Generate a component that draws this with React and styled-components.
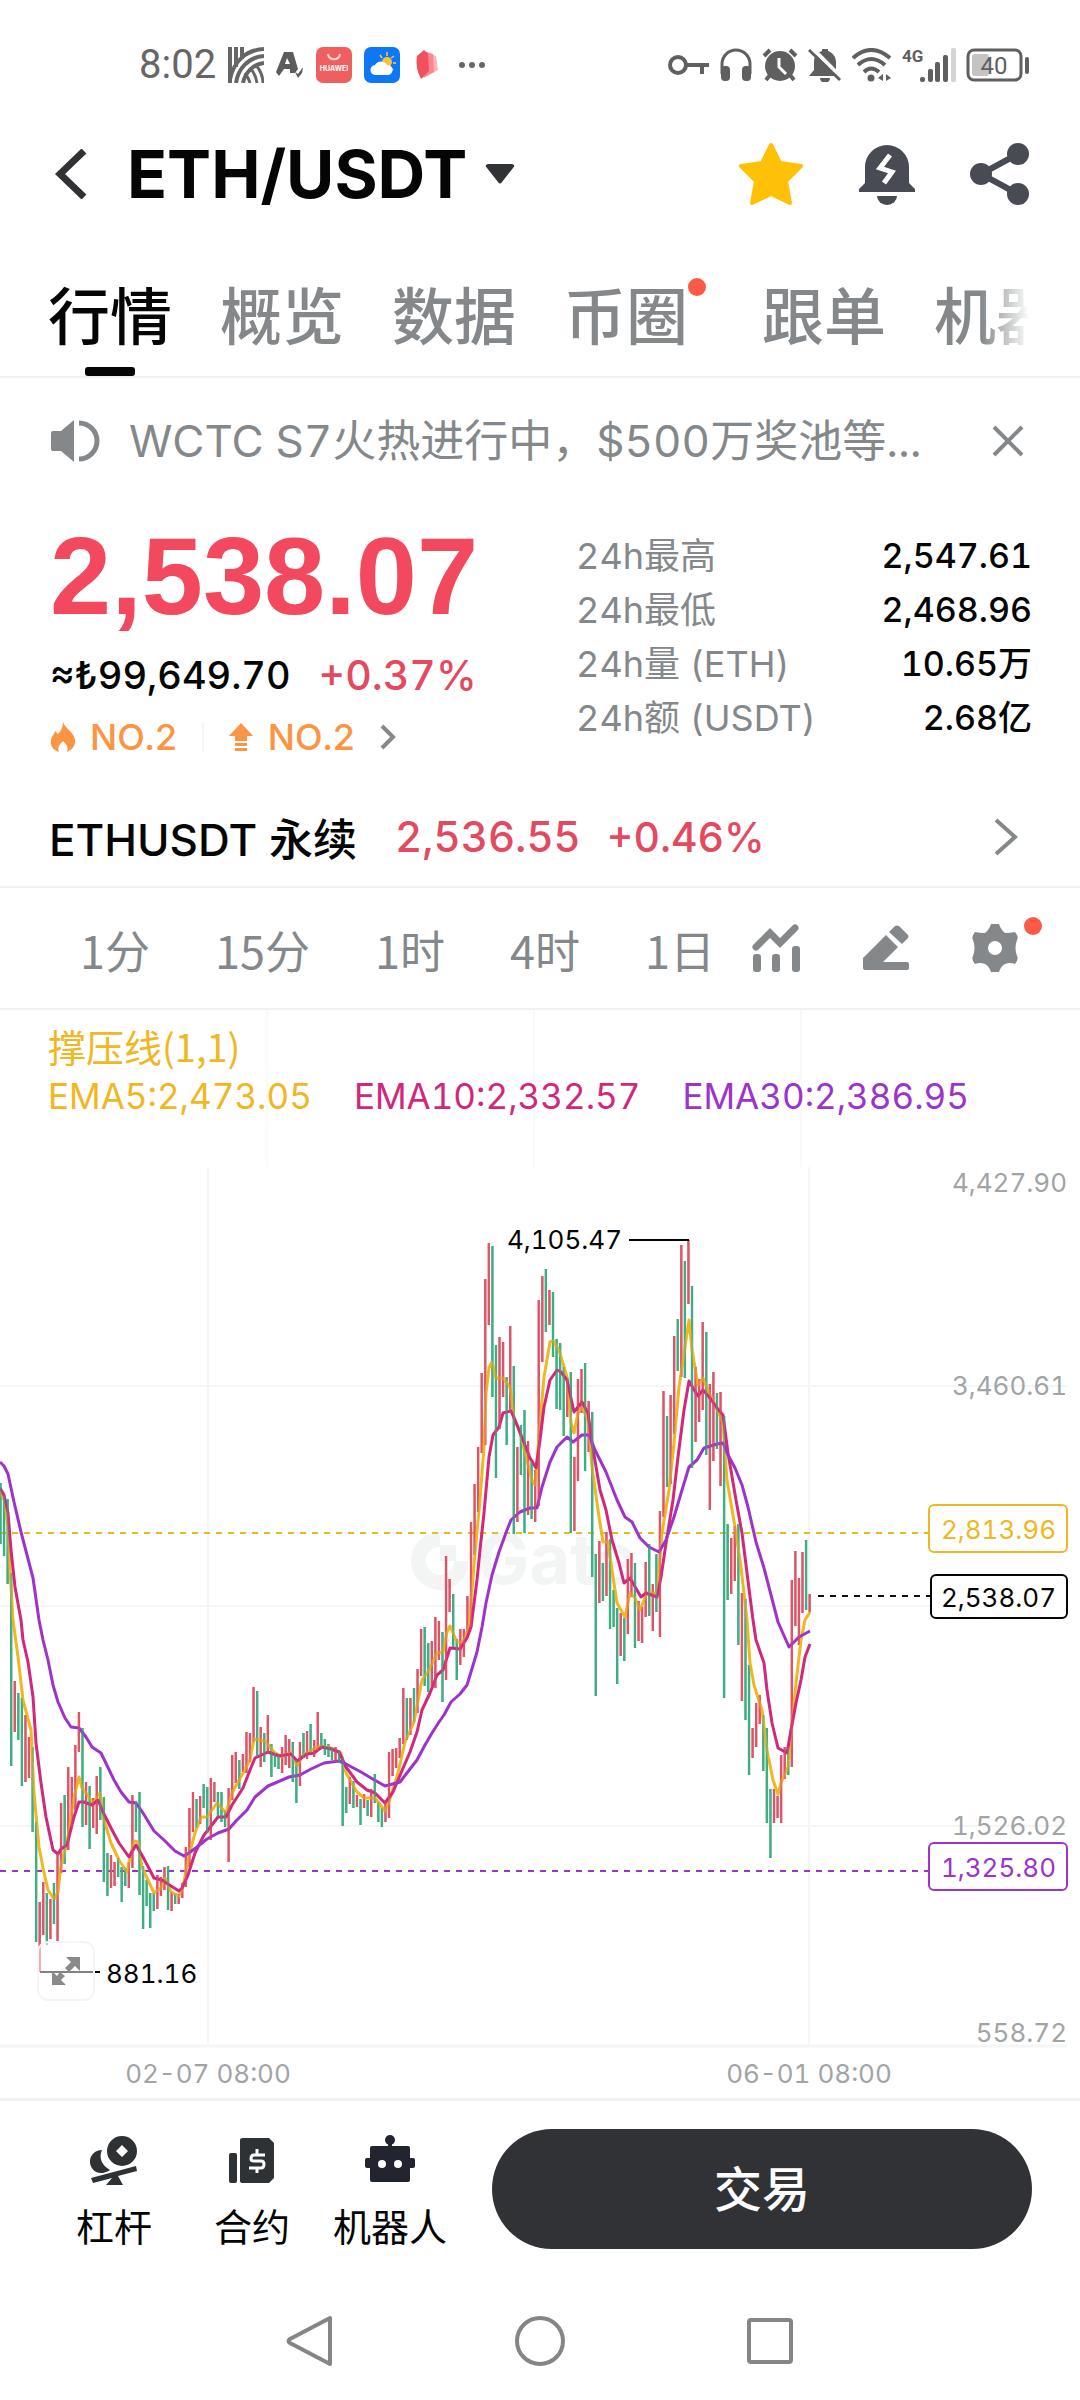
import React, { useState } from "react"
import styled, { createGlobalStyle } from "styled-components"

const GREEN = "#3fae82"
const RED = "#de5568"
const YELLOW = "#f0b723"
const PINK = "#d1277c"
const PURPLE = "#9d33c9"

const STEP = 3.5645

// one entry per candle: direction (r = up, g = down), high and low on the canvas
const CANDLES = `
g473-534 g486-546 g489-574 g563-756 r671-722 g683-730 g688-776 r705-772 r727-768 g737-822
g812-932 r892-962 r872-925 g883-935 r889-929 g873-914 r843-933 r793-863 g785-854 r757-840
r767-817 r735-800 r702-742 g718-817 r772-815 g776-839 r788-818 r766-824 g757-810 g787-872
g843-886 r845-878 r852-876 g848-867 g857-892 g858-876 r852-878 r785-858 g791-822 g782-885
g856-919 g870-896 g883-918 g883-901 r865-899 r867-886 r857-880 g856-900 r882-901 g884-894
r884-894 r873-888 r837-877 r798-857 r782-822 g789-818 r786-814 g774-798 g777-823 r768-830
r772-792 g782-807 g782-812 g801-817 r778-852 r745-790 r742-773 g750-779 r744-762 r722-763
r723-752 r677-732 g681-747 r717-757 g723-752 r705-743 g734-767 g743-757 g745-759 r737-763
r725-755 r729-758 g732-772 g750-793 r732-776 g723-748 r721-749 g714-743 r730-747 r702-741
g723-738 g729-745 g734-747 g737-750 r737-752 g740-753 g747-816 g777-803 r767-794 g771-798
r785-797 g789-815 r784-798 g790-806 r779-807 g764-793 g792-812 g798-817 r792-812 r742-808
r739-766 r738-758 r728-748 r678-734 g688-730 r688-725 g678-712 r659-703 r619-666 g617-676
g633-682 r631-677 r607-678 r611-650 g622-692 r546-670 r569-602 g584-637 g629-670 r619-655
r619-647 r586-623 r512-617 r474-545 r437-502 r363-443 r269-435 r233-315 g236-387 g335-468
r327-419 r332-387 g367-435 r316-403 g356-524 r437-512 g415-465 g400-523 r431-505 g452-509
r460-512 r290-496 r266-352 g259-322 r280-315 g282-347 g329-399 g333-400 g357-426 r368-407
g362-523 r447-521 r369-471 r359-403 g353-461 r391-442 g402-567 g544-686 r531-593 g553-591
r522-586 g529-619 g580-617 g598-674 r603-646 g608-651 r549-624 r543-587 g553-638 r591-631
r597-633 r552-607 g534-606 r574-621 g544-602 r501-627 r381-507 g406-477 r385-474 r326-424
g309-361 r235-367 g251-368 r230-294 g276-458 r357-432 r369-412 r312-400 g322-445 r374-500
r362-451 g383-439 r382-476 g406-688 g514-590 r528-584 r516-571 g514-635 r583-691 g589-710
g655-765 r718-748 r693-737 r685-714 g705-761 g718-813 g779-848 r779-813 r786-808 r745-813
r737-769 g738-765 r570-757 r541-616 r568-635 r542-603 g530-600 r584-602
`
  .trim()
  .split(/\s+/)
  .map((item, i) => {
    const [high, low] = item.slice(1).split("-").map(Number)
    return { x: 0.5 + i * STEP, up: item[0] === "r", high, low }
  })

const EMA5 =
  "0,480 5,492 8,520 10,560 13,610 18,647 23,690 31,720 34,783 39,837 43,858 48,880 54,889 58,882 61,855 67,833 74,787 79,767 82,778 86,783 93,793 100,783 104,810 111,833 119,850 127,862 131,843 134,831 138,832 142,857 148,870 154,883 161,878 165,868 171,882 179,886 183,877 189,845 195,823 201,807 207,807 217,793 226,803 232,783 243,763 250,750 254,729 265,731 274,742 282,747 291,742 297,756 303,745 315,738 320,736 331,738 341,743 346,763 357,782 364,788 375,788 385,801 389,792 398,763 405,732 414,712 422,670 429,660 437,643 443,642 447,622 450,616 457,632 463,632 469,617 475,543 480,490 484,437 486,383 489,358 492,352 496,368 503,368 510,377 514,407 520,423 525,443 532,470 535,475 540,413 544,367 550,332 553,331 559,340 567,367 571,413 574,423 578,403 582,397 588,410 592,457 599,507 603,532 608,532 612,560 617,593 625,607 630,583 635,588 640,600 647,583 657,583 662,523 669,480 674,433 679,377 685,337 689,310 692,340 698,375 703,368 709,383 716,397 723,413 727,470 735,517 741,557 747,610 750,653 754,675 762,700 767,740 773,770 778,784 781,773 788,757 792,713 796,673 801,630 805,610 810,602"

const EMA10 =
  "0,478 4,485 8,503 11,540 15,577 21,610 23,630 28,652 33,687 36,733 41,773 46,807 53,840 58,844 61,839 67,835 74,807 79,792 84,792 92,795 98,790 103,802 111,818 119,833 129,847 136,835 143,847 154,868 162,870 171,876 179,881 182,878 188,865 195,843 204,825 208,820 218,807 226,807 232,795 243,778 250,760 255,748 268,742 279,746 291,744 297,751 307,744 314,743 322,737 331,739 339,742 346,757 357,772 367,780 375,783 385,793 393,782 401,763 410,742 417,722 422,700 430,683 437,665 443,660 450,638 460,639 467,628 471,617 477,570 480,540 484,503 489,447 493,425 499,417 503,403 511,401 517,415 523,430 530,448 536,458 540,430 544,397 550,370 557,360 561,362 567,370 574,402 582,392 588,403 592,433 600,480 606,500 612,530 619,553 624,573 630,568 641,587 646,583 657,587 661,567 667,527 673,490 678,447 684,400 689,371 693,378 698,386 703,380 710,388 717,398 723,405 728,443 736,490 742,523 747,563 753,610 756,630 764,653 767,680 772,713 778,738 787,743 791,720 796,693 801,670 805,647 810,634"

const EMA30 =
  "0,452 4,456 8,464 14,492 21,522 33,568 39,610 43,630 48,650 53,675 58,692 65,708 71,717 79,718 86,727 92,737 101,743 114,770 121,782 129,792 136,793 143,803 154,821 164,830 175,841 184,846 189,843 197,837 207,829 218,823 229,819 236,811 247,800 255,787 268,776 289,767 300,765 311,759 324,753 339,751 346,754 361,762 371,768 385,776 400,772 410,759 417,750 425,735 432,723 439,712 444,705 451,692 460,684 467,675 471,662 477,642 482,617 486,593 492,565 499,542 507,520 511,510 520,502 530,498 537,498 542,477 550,452 557,437 567,427 573,432 582,425 589,425 595,440 606,462 617,490 625,507 632,512 640,528 649,537 659,542 666,530 674,507 682,480 689,457 697,450 704,438 717,434 723,433 728,445 735,458 742,475 748,497 756,532 764,558 771,585 778,612 789,637 799,627 810,621"

const AXIS = [
  { y: 182, label: "4,427.90" },
  { y: 385, label: "3,460.61" },
  { y: 825, label: "1,526.02" },
  { y: 1032, label: "558.72" }
]

const TABS = ["行情", "概览", "数据", "币圈", "跟单", "机器人"]
const PERIODS = ["1分", "15分", "1时", "4时", "1日"]
const STATS = [
  ["24h最高", "2,547.61"],
  ["24h最低", "2,468.96"],
  ["24h量 (ETH)", "10.65万"],
  ["24h额 (USDT)", "2.68亿"]
]

const StatusIcons = () => (
  <>
    <svg width="36" height="36" viewBox="0 0 36 36" fill="none" stroke="#666" strokeWidth="4">
      <path d="M2 0V36M8 0V20M14 0V12" />
      <path d="M2 32C6 14 18 3 36 2M8 36C10 22 20 10 36 9M15 36C17 26 25 17 36 16" />
      <path d="M22 36C21 32 19 29 17 26M29 36C28 30 25 24 22 21M35 36C35 30 32 23 28 18" strokeWidth="3" />
    </svg>
    <svg width="28" height="26" viewBox="0 0 28 26" fill="#5c5c5c">
      <path d="M8 0H17L22 17L19 21H14V17H8L3 24L0 20ZM11 6L9 12H14Z" fillRule="evenodd" />
      <path d="M19 20L22 22L27 15L26 21L22 26Z" />
    </svg>
    <svg width="36" height="36" viewBox="0 0 36 36">
      <rect width="36" height="36" rx="7" fill="#ef5f5f" />
      <path d="M12 7C13 14 23 14 24 7" fill="none" stroke="#fbd3d3" strokeWidth="2" />
      <text x="18" y="24" textAnchor="middle" fontSize="7" fontWeight="700" fill="#fff">HUAWEI</text>
    </svg>
    <svg width="36" height="36" viewBox="0 0 36 36">
      <rect width="36" height="36" rx="7" fill="#0c78f5" />
      <path d="M23 5V9M30 9L27 11M32 16H29M16 8L18 11M29 23L27 21" stroke="#ffc94a" strokeWidth="1.5" />
      <circle cx="23" cy="15" r="5" fill="#fcbf3f" />
      <path d="M12 28A5 5 0 0 1 11 18A7 7 0 0 1 23 18A5 5 0 0 1 24 28Z" fill="#fff" />
    </svg>
    <svg width="34" height="30" viewBox="-4 0 34 30">
      <path d="M10 2L20 6L22 20L8 28Z" fill="#fbb3b8" />
      <path d="M8 1L17 4L18 22L6 28Z" fill="#f8888f" />
      <path d="M8 0L12 4L13 21L5 29Q-1 18 1 6Z" fill="#f2505a" />
    </svg>
    <svg width="28" height="8" viewBox="0 0 28 8" fill="#666">
      <circle cx="4" cy="4" r="3" /><circle cx="14" cy="4" r="3" /><circle cx="24" cy="4" r="3" />
    </svg>
  </>
)

const SystemIcons = () => (
  <>
    <svg width="42" height="20" viewBox="0 0 42 20" fill="none" stroke="#5f5f5f" strokeWidth="4">
      <circle cx="10" cy="10" r="8" />
      <path d="M18 10H41M34 10V19" />
    </svg>
    <svg width="32" height="34" viewBox="0 0 32 34" fill="#5f5f5f">
      <path d="M2 26V16A14 14 0 0 1 30 16V26" fill="none" stroke="#5f5f5f" strokeWidth="3" />
      <rect x="1" y="18" width="9" height="15" rx="4" /><rect x="22" y="18" width="9" height="15" rx="4" />
    </svg>
    <svg width="36" height="34" viewBox="0 0 36 34">
      <path d="M2 8L8 2M34 8L28 2M8 27L4 32M28 27L32 32" stroke="#5f5f5f" strokeWidth="4" />
      <circle cx="18" cy="18" r="15" fill="#5f5f5f" />
      <path d="M17 10V19L24 26" fill="none" stroke="#fff" strokeWidth="3" />
    </svg>
    <svg width="34" height="34" viewBox="0 0 34 34">
      <path d="M1 28L6 22V14C6 7 11 4 14 3V1H20V3C25 5 28 9 28 14V22L33 28Z" fill="#5f5f5f" />
      <path d="M12 30H22A5 5 0 0 1 12 30Z" fill="#5f5f5f" />
      <path d="M4 0L36 32" stroke="#fff" strokeWidth="4" />
      <path d="M1 2L32 32" stroke="#5f5f5f" strokeWidth="3" />
    </svg>
    <svg width="40" height="34" viewBox="0 0 40 34" fill="none" stroke="#5f5f5f" strokeWidth="4">
      <path d="M1 10Q19 -6 38 10M6 17Q19 5 33 17M12 24Q19 17 27 24" />
      <circle cx="19" cy="30" r="3.5" fill="#5f5f5f" stroke="none" />
      <path d="M31 26V33L26 30ZM34 26V33L39 30Z" fill="#5f5f5f" stroke="none" />
    </svg>
    <svg width="54" height="36" viewBox="0 0 54 36" fill="#5f5f5f">
      <text x="0" y="15" fontSize="17" fontWeight="700" fontFamily="Roboto, sans-serif">4G</text>
      <rect x="18" y="30" width="5" height="5" rx="2" />
      <rect x="26" y="22" width="5" height="13" rx="2" />
      <rect x="33" y="15" width="5" height="20" rx="2" />
      <rect x="41" y="8" width="5" height="27" rx="2" />
      <rect x="49" y="1" width="5" height="34" rx="2" fill="#d4d4d4" />
    </svg>
    <svg width="64" height="34" viewBox="0 0 64 34">
      <rect x="2" y="2" width="53" height="30" rx="6" fill="none" stroke="#5f5f5f" strokeWidth="3" />
      <rect x="6" y="6" width="17" height="22" rx="3" fill="#c4c4c4" />
      <rect x="59" y="9" width="4" height="17" rx="2" fill="#5f5f5f" />
      <text x="28" y="26" textAnchor="middle" fontSize="24" fontFamily="Roboto, sans-serif" fill="#5f5f5f">40</text>
    </svg>
  </>
)

const Chevron = ({ w, h, stroke = 4, color = "#84888b", left }) => (
  <svg width={w} height={h} viewBox={`0 0 ${w} ${h}`} fill="none" stroke={color} strokeWidth={stroke}>
    <path d={left ? `M${w - 3} 2L5 ${h / 2}L${w - 3} ${h - 2}` : `M2 2L${w - 3} ${h / 2}L2 ${h - 2}`} />
  </svg>
)

const Tag = ({ x = 929, y, height, color, base, children }) => (
  <g>
    <rect x={x} y={y} width={1067 - x} height={height} rx="5" fill="#fff" stroke={color} strokeWidth="2" />
    <text x="1056" y={base} textAnchor="end" fill={color}>{children}</text>
  </g>
)

const Chart = () => (
  <Canvas viewBox="0 0 1080 1088" role="img" aria-label="ETH/USDT">
    <g stroke="#f4f5f5" strokeWidth="2">
      <path d="M267 0V157M534 0V157M801 0V157" stroke="#f8f9f9" />
      <path d="M208 157V1036M809 157V1036M0 376H1067M0 596H1067M0 816H1067" />
      <path d="M0 1036H1067" strokeWidth="3" />
    </g>
    <g fill="#f3f5f5">
      <path d="M440 522A29 29 0 1 0 469 551H454A14 14 0 1 1 440 537Z" />
      <rect x="440" y="535" width="16" height="16" />
      <text x="477" y="574" fontSize="70" fontWeight="700">Gate</text>
    </g>
    <g fill="none" strokeWidth="2" strokeDasharray="6 6">
      <path d="M0 523H929" stroke={YELLOW} />
      <path d="M0 861H929" stroke={PURPLE} />
      <path d="M818 586H931" stroke="#111" />
    </g>
    {CANDLES.map(c => (
      <path key={c.x} d={`M${c.x} ${c.high}V${c.low}`} stroke={c.up ? RED : GREEN} strokeWidth="2.4" />
    ))}
    <g fill="none" strokeWidth="3" strokeLinejoin="round">
      <polyline points={EMA5} stroke={YELLOW} />
      <polyline points={EMA10} stroke={PINK} />
      <polyline points={EMA30} stroke={PURPLE} />
    </g>
    <g opacity="0.55">
      {CANDLES.map(c => (
        <path key={c.x} d={`M${c.x} ${c.high}V${c.low}`} stroke={c.up ? RED : GREEN} strokeWidth="2" />
      ))}
    </g>
    <g fill="#050505">
      <text x="622" y="239" textAnchor="end">4,105.47</text>
      <text x="106" y="973">881.16</text>
      <path d="M629 230H689M40 962H100" stroke="#050505" strokeWidth="2" />
    </g>
    <g>
      <rect x="38" y="932" width="56" height="58" rx="10" fill="#fff" fillOpacity="0.5" stroke="#f4f5f5" strokeWidth="2" />
      <path d="M66 947H80V961L75 956L69 962L65 958L71 952ZM52 961L57 966L60 962L65 966L61 970L66 975H52Z" fill="#8a8a8a" />
    </g>
    <g fill="#a1a4a6">
      {AXIS.map(a => (
        <text key={a.label} x="1067" y={a.y} textAnchor="end">{a.label}</text>
      ))}
      <text x="208" y="1073" textAnchor="middle">02-07 08:00</text>
      <text x="809" y="1073" textAnchor="middle">06-01 08:00</text>
    </g>
    <Tag y={495} height={47} color={YELLOW} base={529}>2,813.96</Tag>
    <Tag x={931} y={565} height={43} color="#050505" base={597}>2,538.07</Tag>
    <Tag y={833} height={47} color={PURPLE} base={867}>1,325.80</Tag>
  </Canvas>
)

export default function App() {
  const [tab, setTab] = useState("行情")
  return (
    <Page>
      <GlobalStyle />
      <StatusBar>
        <StatusGroup $gap={12}>
          <Clock>8:02</Clock>
          <StatusIcons />
        </StatusGroup>
        <StatusGroup $gap={10}>
          <SystemIcons />
        </StatusGroup>
      </StatusBar>

      <Header>
        <IconButton aria-label="返回">
          <Chevron left w={32} h={50} stroke={7} color="#303236" />
        </IconButton>
        <PairButton>
          <Pair>ETH/USDT</Pair>
          <svg width="30" height="20" viewBox="0 0 30 20" fill="#303236">
            <path d="M3 0H27Q31 1 28 4L17 18Q15 21 13 18L2 4Q-1 1 3 0Z" />
          </svg>
        </PairButton>
        <HeaderActions>
          <IconButton aria-label="收藏">
            <svg width="66" height="64" viewBox="0 0 66 64">
              <path d="M33 3L42 21L63 24L48 39L52 61L33 52L14 61L18 39L3 24L24 21Z" fill="#ffc107" stroke="#ffc107" strokeWidth="4" strokeLinejoin="round" />
            </svg>
          </IconButton>
          <IconButton aria-label="提醒">
            <svg width="58" height="62" viewBox="0 0 58 62" fill="#484b53">
              <path d="M7 40V24A22 22 0 0 1 51 24V40L57 46V49H1V46Z" />
              <path d="M19 53H39A10 9 0 0 1 19 53Z" />
              <path d="M32 12L22 25L34 29L26 40" fill="none" stroke="#fff" strokeWidth="5" />
            </svg>
          </IconButton>
          <IconButton aria-label="分享">
            <svg width="60" height="62" viewBox="0 0 60 62" fill="#484b53">
              <path d="M48 11L11 31L48 51" fill="none" stroke="#484b53" strokeWidth="6" />
              <circle cx="48" cy="11" r="11" /><circle cx="11" cy="31" r="11" /><circle cx="48" cy="51" r="11" />
            </svg>
          </IconButton>
        </HeaderActions>
      </Header>

      <TabBar>
        <TabScroller>
          {TABS.map(name => (
            <Tab key={name} $active={name === tab} onClick={() => setTab(name)}>
              {name}
              {name === "币圈" && <TabDot />}
            </Tab>
          ))}
        </TabScroller>
      </TabBar>

      <Notice>
        <svg width="50" height="42" viewBox="0 0 50 42" fill="#84888b">
          <path d="M2 11H10L23 0V42L10 31H2Q0 31 0 29V13Q0 11 2 11Z" />
          <path d="M28 3A18 18 0 0 1 28 39" fill="none" stroke="#84888b" strokeWidth="5" />
        </svg>
        <NoticeText href="#notice">WCTC S7火热进行中，$500万奖池等...</NoticeText>
        <IconButton aria-label="关闭">
          <svg width="32" height="32" viewBox="0 0 32 32" stroke="#84888b" strokeWidth="4">
            <path d="M2 2L30 30M30 2L2 30" />
          </svg>
        </IconButton>
      </Notice>

      <Summary>
        <div>
          <Price>2,538.07</Price>
          <Fiat>
            <span>≈₺99,649.70</span>
            <Change>+0.37%</Change>
          </Fiat>
          <Ranks>
            <Rank>
              <svg width="26" height="30" viewBox="0 0 26 30" fill="#fb9543">
                <path d="M13 0C15 7 26 11 25 20C25 25 21 28 17 30C19 25 16 22 13 19C10 22 7 25 9 30C4 28 0 25 1 19C1 15 4 13 5 9L8 12C11 9 13 5 13 0Z" />
              </svg>
              NO.2
            </Rank>
            <RankDivider />
            <Rank>
              <svg width="26" height="28" viewBox="0 0 26 28" fill="#fb9543">
                <path d="M13 0L25 13H19V18H7V13H1ZM7 20H19V23H7ZM7 25H19V28H7Z" />
              </svg>
              NO.2
            </Rank>
            <Chevron w={16} h={26} />
          </Ranks>
        </div>
        <Stats>
          {STATS.map(([label, value]) => (
            <Stat key={label}>
              <dt>{label}</dt>
              <dd>{value}</dd>
            </Stat>
          ))}
        </Stats>
      </Summary>

      <Perpetual href="#perpetual">
        <PerpName>ETHUSDT 永续</PerpName>
        <PerpPrice>2,536.55</PerpPrice>
        <Change>+0.46%</Change>
        <PerpArrow>
          <Chevron w={24} h={38} />
        </PerpArrow>
      </Perpetual>

      <Periods>
        <PeriodList>
          {PERIODS.map(name => <Period key={name}>{name}</Period>)}
        </PeriodList>
        <Tools>
          <IconButton aria-label="指标">
            <svg width="48" height="48" viewBox="0 0 48 48" fill="#84888b">
              <path d="M4 23L18 9L28 19L43 4" fill="none" stroke="#84888b" strokeWidth="7" strokeLinecap="round" />
              <rect x="1" y="30" width="8" height="18" rx="3" /><rect x="20" y="30" width="8" height="18" rx="3" />
              <rect x="40" y="22" width="8" height="26" rx="3" />
            </svg>
          </IconButton>
          <IconButton aria-label="画线">
            <svg width="48" height="46" viewBox="0 0 48 46" fill="#84888b">
              <path d="M24 10L36 22L21 37H45Q47 37 47 39V43Q47 45 45 45H3Q1 45 1 43V33Z" />
              <path d="M27 7L33 1Q35 0 37 1L46 10Q47 12 46 13L40 19Z" />
            </svg>
          </IconButton>
          <IconButton aria-label="设置">
            <svg width="46" height="50" viewBox="0 0 46 50">
              <path d="M19 1H27Q29 7 33 10Q38 10 43 9Q47 14 45 17Q42 25 45 33Q47 36 43 41Q38 39 33 41Q29 43 27 49H19Q17 43 13 41Q8 39 3 41Q-1 36 1 33Q4 25 1 17Q-1 14 3 9Q8 10 13 10Q17 7 19 1ZM23 18A7 7 0 1 0 23 32A7 7 0 1 0 23 18Z" fill="#84888b" fillRule="evenodd" />
            </svg>
            <ToolDot />
          </IconButton>
        </Tools>
      </Periods>

      <ChartArea>
        <Chart />
        <Legend>
          <LegendTitle>撑压线(1,1)</LegendTitle>
          <LegendRow>
            <LegendItem $color={YELLOW}>EMA5:2,473.05</LegendItem>
            <LegendItem $color={PINK}>EMA10:2,332.57</LegendItem>
            <LegendItem $color={PURPLE}>EMA30:2,386.95</LegendItem>
          </LegendRow>
        </Legend>
      </ChartArea>

      <BottomBar>
        <Shortcut>
          <svg width="50" height="52" viewBox="0 0 50 52" fill="#2e3235">
            <path d="M13 15C9 24 14 31 21 35C9 43 0 34 1 25C2 19 7 15 13 15Z" />
            <path d="M33 1A15 15 0 1 0 33 31A15 15 0 1 0 33 1ZM33 10L39 16L33 22L27 16Z" fillRule="evenodd" />
            <path d="M2 43L47 31L48 36L29 41L34 50H17L23 43L4 48Z" />
          </svg>
          杠杆
        </Shortcut>
        <Shortcut>
          <svg width="46" height="52" viewBox="0 0 46 52" fill="#2e3235">
            <rect x="0" y="18" width="8" height="30" rx="2" />
            <path d="M14 3H40L45 8V43L40 48H14Q11 48 11 46V5Q11 3 14 3Z" />
            <path d="M36 20H25Q22 20 22 24Q22 26 25 26H32Q35 26 35 29Q35 33 32 33H20M28 14V20M28 33V38" fill="none" stroke="#fff" strokeWidth="3" />
          </svg>
          合约
        </Shortcut>
        <Shortcut>
          <svg width="50" height="52" viewBox="0 0 50 52" fill="#22242f">
            <circle cx="25" cy="5" r="5" />
            <rect x="23" y="6" width="4" height="8" /><rect x="0" y="23" width="50" height="10" rx="2" />
            <rect x="5" y="11" width="40" height="36" rx="2" />
            <circle cx="17" cy="29" r="4" fill="#fff" /><circle cx="33" cy="29" r="4" fill="#fff" />
          </svg>
          机器人
        </Shortcut>
        <TradeButton>交易</TradeButton>
      </BottomBar>

      <SystemNav>
        <IconButton aria-label="后退">
          <svg width="50" height="52" viewBox="0 0 50 52" fill="none" stroke="#858585" strokeWidth="4" strokeLinejoin="round">
            <path d="M45 3V49L5 28Q2 26 5 24Z" />
          </svg>
        </IconButton>
        <IconButton aria-label="主页">
          <svg width="50" height="52" viewBox="0 0 50 52" fill="none" stroke="#858585" strokeWidth="4">
            <circle cx="25" cy="26" r="23" />
          </svg>
        </IconButton>
        <IconButton aria-label="最近任务">
          <svg width="50" height="52" viewBox="0 0 50 52" fill="none" stroke="#858585" strokeWidth="4">
            <rect x="4" y="5" width="42" height="42" rx="2" />
          </svg>
        </IconButton>
      </SystemNav>
    </Page>
  )
}

const GlobalStyle = createGlobalStyle`
  * { box-sizing: border-box; }
  body {
    margin: 0;
    background: #fff;
    color: #050505;
    font-family: Inter, "Noto Sans CJK SC", sans-serif;
    font-variant-numeric: tabular-nums;
  }
  svg { display: block; flex: none; }
  button {
    margin: 0;
    padding: 0;
    border: 0;
    background: none;
    color: inherit;
    font: inherit;
  }
  a { color: inherit; text-decoration: none; }
`

const Page = styled.div`
  display: flex;
  flex-direction: column;
`

const StatusBar = styled.div`
  display: flex;
  justify-content: space-between;
  align-items: center;
  height: 130px;
  padding: 0 50px 0 139px;
`

const StatusGroup = styled.div`
  display: flex;
  align-items: center;
  gap: ${p => p.$gap}px;
`

const Clock = styled.span`
  color: #666;
  font: 40px/48px Roboto, sans-serif;
`

const IconButton = styled.button`
  position: relative;
  display: flex;
  align-items: center;
`

const Header = styled.header`
  display: flex;
  align-items: center;
  height: 88px;
  padding: 0 50px 0 55px;
`

const PairButton = styled.button`
  display: flex;
  align-items: center;
  gap: 18px;
  margin-left: 40px;
`

const Pair = styled.span`
  font-size: 66px;
  font-weight: 700;
  line-height: 80px;
`

const HeaderActions = styled.div`
  display: flex;
  align-items: center;
  gap: 54px;
  margin-left: auto;
`

const TabBar = styled.nav`
  padding: 0 50px 0 48px;
  border-bottom: 2px solid #f0f2f2;
`

const TabScroller = styled.div`
  display: flex;
  gap: 48px;
  height: 158px;
  overflow: hidden;
  mask-image: linear-gradient(to right, #000 95%, transparent);
`

const Tab = styled.button`
  position: relative;
  display: flex;
  flex: none;
  padding-top: 56px;
  color: ${p => (p.$active ? "#050505" : "#84888b")};
  font-size: 62px;
  font-weight: 500;
  line-height: 88px;

  &::after {
    content: "";
    position: absolute;
    left: 37px;
    right: 37px;
    bottom: 0;
    height: 9px;
    border-radius: 3px;
    background: ${p => (p.$active ? "#050505" : "transparent")};
  }
`

const TabDot = styled.i`
  width: 18px;
  height: 18px;
  margin: 4px 8px 0 0;
  border-radius: 50%;
  background: #fa5a46;
`

const ToolDot = styled.i`
  position: absolute;
  top: -6px;
  right: -24px;
  width: 18px;
  height: 18px;
  border-radius: 50%;
  background: #fa5a46;
`

const Notice = styled.div`
  display: flex;
  align-items: center;
  height: 126px;
  padding: 0 56px 0 51px;
  color: #84888b;
`

const NoticeText = styled.a`
  flex: 1;
  margin-left: 28px;
  font-size: 44px;
  line-height: 64px;
  white-space: nowrap;
`

const Summary = styled.section`
  display: grid;
  grid-template-columns: 15fr 13fr;
  padding: 14px 48px 0 50px;
`

const Price = styled.div`
  color: #f2495e;
  font: 700 110px/116px "Liberation Sans", sans-serif;
`

const Fiat = styled.div`
  display: flex;
  align-items: center;
  gap: 28px;
  margin-top: 11px;
  font-size: 38px;
  font-weight: 500;
  line-height: 60px;
`

const Change = styled.span`
  color: #e34a60;
  font-size: 41px;
  font-weight: 500;
`

const Ranks = styled.div`
  display: flex;
  align-items: center;
  height: 64px;
  color: #fb9543;
`

const Rank = styled.span`
  display: flex;
  align-items: center;
  gap: 14px;
  margin-right: 24px;
  font-size: 36px;
  font-weight: 500;
`

const RankDivider = styled.i`
  width: 2px;
  height: 30px;
  margin-right: 24px;
  background: #f5f6f6;
`

const Stats = styled.dl`
  margin: 11px 0 0;
`

const Stat = styled.div`
  display: flex;
  justify-content: space-between;
  font-size: 36px;
  line-height: 54px;

  dt { color: #84888b; }
  dd {
    margin: 0;
    font-size: 34px;
    font-weight: 500;
  }
`

const Perpetual = styled.a`
  display: flex;
  align-items: center;
  height: 119px;
  padding: 18px 62px 0 49px;
  border-bottom: 2px solid #f0f2f2;
`

const PerpName = styled.span`
  margin-right: 38px;
  font-size: 44px;
  font-weight: 500;
`

const PerpPrice = styled.span`
  margin-right: 26px;
  color: #e34a60;
  font-size: 42px;
  font-weight: 500;
`

const PerpArrow = styled.span`
  margin-left: auto;
`

const Periods = styled.div`
  display: flex;
  align-items: center;
  height: 122px;
  padding: 0 62px 0 80px;
  border-bottom: 2px solid #f0f2f2;
`

const PeriodList = styled.div`
  display: flex;
  gap: 65px;
`

const Period = styled.button`
  padding-top: 4px;
  color: #84888b;
  font: 45px/64px "Noto Sans CJK SC", sans-serif;
`

const Tools = styled.div`
  display: flex;
  align-items: center;
  gap: 62px;
  margin-left: auto;
`

const ChartArea = styled.section`
  position: relative;
  border-bottom: 3px solid #f0f2f2;
`

const Canvas = styled.svg`
  width: 100%;
  height: auto;
  font-family: Inter, sans-serif;
  font-size: 26px;
`

const Legend = styled.div`
  position: absolute;
  top: 11px;
  left: 48px;
`

const LegendTitle = styled.div`
  color: ${YELLOW};
  font: 38px/50px "Noto Sans CJK SC", sans-serif;
`

const LegendRow = styled.div`
  display: flex;
  gap: 42px;
  font-size: 35px;
  line-height: 50px;
`

const LegendItem = styled.span`
  color: ${p => p.$color};
`

const BottomBar = styled.footer`
  display: flex;
  height: 180px;
  padding: 28px 48px 0 45px;
`

const Shortcut = styled.button`
  display: flex;
  flex: 0 0 138px;
  flex-direction: column;
  align-items: center;
  gap: 12px;
  padding-top: 6px;
  font-size: 38px;
  line-height: 56px;
`

const TradeButton = styled.button`
  flex: 1;
  height: 120px;
  margin-left: 33px;
  padding-bottom: 6px;
  border-radius: 60px;
  background: #303236;
  color: #fff;
  font-size: 48px;
  font-weight: 500;
`

const SystemNav = styled.nav`
  display: flex;
  justify-content: center;
  align-items: center;
  gap: 180px;
  height: 119px;
`
